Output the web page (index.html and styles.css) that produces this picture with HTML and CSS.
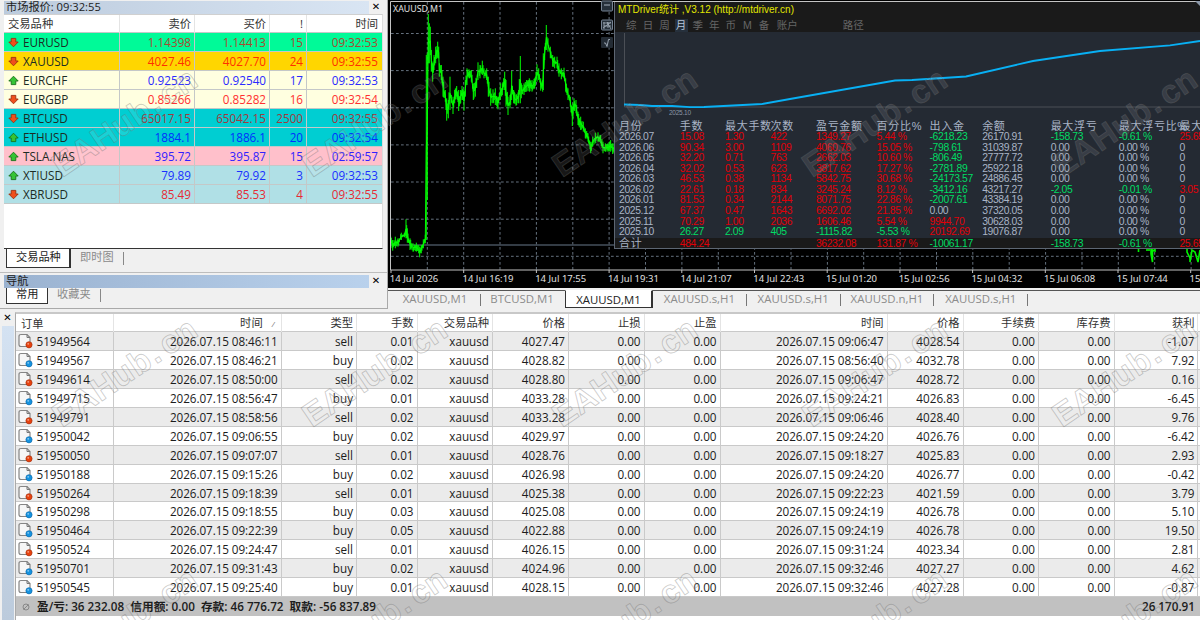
FILE: index.html
```html
<!DOCTYPE html>
<html lang="zh-CN">
<head>
<meta charset="utf-8">
<title>XAUUSD,M1</title>
<link rel="stylesheet" href="styles.css">
</head>
<body>
<div class="app">
  <div class="top">
    <aside class="side">
      <section class="watch">
        <div class="titlebar"><div class="caption">市场报价: 09:32:55</div><span class="close">✕</span></div>
        <div class="quotes" id="quotes">
          <div class="quote head"><span>交易品种</span><span>卖价</span><span>买价</span><span>!</span><span>时间</span></div>
        </div>
        <div class="tabs"><span class="tab on">交易品种</span><span class="tab">即时图</span></div>
      </section>
      <section class="nav">
        <div class="titlebar active"><div class="caption">导航</div><span class="close">✕</span></div>
        <div class="tabs short"><span class="tab on">常用</span><span class="tab">收藏夹</span></div>
      </section>
    </aside>
    <main class="main">
      <div class="chart">
        <svg class="plot" id="plot" width="812" height="288" viewBox="388 0 812 288"></svg>
        <div class="stats">
          <div class="stats-head">
            <svg width="200" height="17"><text x="3" y="11" textLength="176" lengthAdjust="spacingAndGlyphs" class="stats-title">MTDriver统计 ,V3.12 (http://mtdriver.cn)</text></svg>
            <div class="periods"><span>综</span><span>日</span><span>周</span><span class="on">月</span><span>季</span><span>年</span><span>币</span><span>M</span><span>备</span><span class="wide">账户</span><span class="path">路径</span></div>
          </div>
          <svg class="curve" width="585" height="87" viewBox="615 32 585 87">
            <path d="M624.5 33V107H1200" fill="none" stroke="#4b4f56"/>
            <polyline points="624,104.5 640,105 652,106 672,106 690,107.2 704,107 762,104 790,99 895,80.5 912,80 966,76.5 1033,61 1100,51 1170,45.3 1200,41" fill="none" stroke="#08b0f4" stroke-width="1.8"/>
            <text x="669" y="115" textLength="22" class="tiny">2025.10</text>
          </svg>
          <div class="months" id="months"></div>
        </div>
      </div>
      <div class="charttabs"><span>XAUUSD,M1</span><span>BTCUSD,M1</span><span class="on">XAUUSD,M1</span><span>XAUUSD.s,H1</span><span>XAUUSD.s,H1</span><span>XAUUSD.n,H1</span><span>XAUUSD.s,H1</span></div>
    </main>
  </div>
  <div class="terminal">
    <div class="grip"><span class="close">✕</span><div class="gripbar"></div></div>
    <div class="orders" id="orders">
      <div class="order head"><span>订单</span><span class="sorted">时间<i>/</i></span><span>类型</span><span>手数</span><span>交易品种</span><span>价格</span><span>止损</span><span>止盈</span><span>时间</span><span>价格</span><span>手续费</span><span>库存费</span><span>获利</span></div>
    </div>
  </div>
  <svg class="marks" id="marks" width="1200" height="620"></svg>
</div>
<script src="app.js"></script>
</body>
</html>
```
FILE: styles.css
```css
* { box-sizing: border-box; }
body { margin: 0; background: #f0f0f0; font-family: "Open Sans", "Noto Sans CJK SC", sans-serif; font-size: 11.7px; color: #1c1c1c; }
.app { position: relative; width: 1200px; height: 620px; overflow: hidden; display: flex; flex-direction: column; }
.top { display: flex; height: 312px; flex: none; }
.side { width: 388px; flex: none; display: flex; flex-direction: column; border-right: 1px solid #a9a9a9; height: 309px; border-bottom: 1px solid #a9a9a9; }
.watch { padding: 1px 4px 0 4px; height: 273px; border-bottom: 1px solid #bdbdbd; display: flex; flex-direction: column; }
.nav { padding: 2px 4px 0 4px; }
.titlebar { display: flex; height: 13px; width: 379px; line-height: 12px; font-size: 11.2px; }
.caption { width: 365px; padding-left: 2px; background: linear-gradient(90deg, #bccbdd, #d9e5f3); white-space: nowrap; }
.active .caption { background: linear-gradient(90deg, #9ab2d0, #b9d1ec); }
.close { flex: 1; text-align: center; font: bold 10px/12px "DejaVu Sans", sans-serif; color: #000; }
.quotes { background: #fff; width: 379px; height: 235px; border-top: 1px solid #d0d0d0; border-bottom: 1px solid #333; border-right: 1px solid #ddd; }
.quote { display: grid; grid-template-columns: 116px 75px 75px 37px 75px; height: 19px; line-height: 18px; border-bottom: 1px solid #c4c8c8; width: 378px; }
.quote span { border-right: 1px solid #c4c8c8; padding-right: 3px; text-align: right; white-space: nowrap; }
.quote span:first-child { text-align: left; padding-left: 4px; display: flex; align-items: center; }
.quote span:last-child { padding-right: 4px; border-right: 0; }
.quote.head { color: #333; font-size: 11.3px; height: 18px; }
.quote.head span { border-color: #e4e4e4; }
.quote svg { margin-right: 4px; flex: none; }
.tabs { display: flex; width: 379px; height: 19px; padding-left: 2px; }
.tab { padding: 0 9px 0 9px; font-size: 11.2px; line-height: 16px; color: #8a8a8a; white-space: nowrap; }
.tab.on { background: #fff; color: #222; border: 1px solid #333; border-top: 0; border-right-width: 2px; height: 19px; width: 65px; padding-right: 0; }
.tab:not(.on) { border-right: 1px solid #888; height: 13px; margin-top: 3px; line-height: 10px; }
.short { height: 16px; }
.short .tab.on { height: 16px; line-height: 12px; border-right-width: 1px; width: 42px; }
.short .tab:not(.on) { margin-top: 1px; line-height: 9px; }
.main { flex: 1; display: flex; flex-direction: column; }
.chart { position: relative; width: 812px; height: 288px; background: #000; }
.plot { display: block; }
.plot text { font-family: "Noto Sans", sans-serif; font-size: 9.3px; fill: #e0e0e0; }
.stats { position: absolute; left: 226px; top: 2px; width: 586px; height: 247px; overflow: hidden; background: #242a33; border-left: 1px solid #5d6672; border-bottom: 1px solid #5d6672; font-family: "Liberation Sans", "Noto Sans CJK SC", sans-serif; }
.stats-head { height: 30px; background: #1a1a1a; }
.stats-head svg { display: block; }
.stats-title { font-size: 10.3px; fill: #e2e600; }
.periods { display: flex; padding-left: 8px; height: 13px; font-size: 10.5px; line-height: 13px; color: #666; overflow: hidden; }
.periods span { width: 16.6px; text-align: center; flex: none; }
.periods .on { background: #26303c; color: #b9c8dc; width: 13px; margin: 0 1.8px; }
.periods .wide { width: 30px; }
.periods .path { width: 30px; margin-left: 36px; }
.curve { display: block; }
.tiny { font-size: 6.5px; fill: #8b97a5; }
.months { color: #a9b4c6; font-size: 10.4px; letter-spacing: -.4px; }
.month { display: grid; grid-template-columns: 60.8px 45.2px 45.6px 45.4px 60.6px 53px 52.6px 68.5px 68.2px 60.6px 60px; padding-left: 4px; height: 10.57px; line-height: 10px; white-space: nowrap; }
.month.head { height: 13px; line-height: 14px; font-size: 11px; letter-spacing: .7px; }
.month.total { background: #1a1a1a; height: 11px; line-height: 12px; }
.month.total span:first-child { font-size: 11px; line-height: 11px; letter-spacing: .7px; }
.r { color: #e00008; }
.g { color: #00dc64; }
.charttabs { display: flex; align-items: flex-start; height: 24px; border-top: 1px solid #555; margin-top: 2px; padding-left: 2px; }
.charttabs span { height: 12px; line-height: 10px; margin-top: 3px; border-right: 1px solid #777; color: #8c8c8c; text-align: center; white-space: nowrap; font-size: 11.4px; width: 93.8px; flex: none; }
.charttabs span:first-child { width: 91px; }
.charttabs span:nth-child(2) { width: 84px; border: 0; padding-right: 2px; }
.charttabs .on { width: 88px; height: 18px; line-height: 15px; margin-top: -1px; background: #fff; color: #222; border: 1px solid #333; border-top-color: #fff; border-right-width: 2px; padding-top: 1px; }
.terminal { display: flex; flex: 1; }
.grip { width: 15px; flex: none; padding: 0 0 0 2px; display: flex; flex-direction: column; }
.grip .close { height: 14px; flex: none; width: 11px; }
.gripbar { flex: 1; width: 12px; background: linear-gradient(#d4e2f2, #bccbdc); }
.orders { width: 1185px; flex: none; background: #fff; border-left: 1px solid #aaa; border-top: 2px solid #c8c8c8; }
.order { display: grid; grid-template-columns: 98px 167.5px 75.5px 60.5px 75.5px 76px 75.5px 76px 167px 76px 75.5px 75.5px 83px; height: 18.94px; line-height: 18px; border-bottom: 1px solid #c9c9c9; }
.order:nth-child(even) { background: #ebebeb; }
.order span { border-right: 1px solid #cacaca; padding-right: 3px; text-align: right; white-space: nowrap; }
.order span:first-child { text-align: left; padding-left: 2px; display: flex; align-items: center; }
.order span:last-child { padding-right: 2px; }
.order span:nth-child(2):not(.sorted), .order:not(.head) span:nth-child(9) { letter-spacing: -.07px; }
.order svg { margin-right: 3.5px; flex: none; }
.order.head { font-size: 11.3px; color: #333; height: 18px; }
.order.head span { border-color: #e4e4e4; }
.order.head span:first-child { padding-left: 5px; }
.order .sorted { padding-right: 6px; }
.sorted i { font-size: 8px; margin-left: 9px; color: #777; }
.summary { background: #c1c1c1; height: 19px; line-height: 19px; display: flex; font-weight: 600; padding: 0 5px 0 6px; white-space: pre; font-size: 11.7px; align-items: center; }
.summary .total { margin-left: auto; }
.summary svg { margin-right: 7px; }
.marks { position: absolute; left: 0; top: 0; pointer-events: none; }
.marks text { font-family: "Liberation Sans", sans-serif; font-size: 33px; font-weight: bold; fill: rgba(255,255,255,.1); stroke: rgba(110,110,110,.36); stroke-width: .9; stroke-linejoin: round; }
```
FILE: app.js
```javascript
const $ = id => document.getElementById(id);

// Market watch
const quotes = [
  ['EURUSD', '1.14398', '1.14413', '15', '09:32:53', 0, '#00fa98', '#a84a30'],
  ['XAUUSD', '4027.46', '4027.70', '24', '09:32:55', 0, '#ffd600', '#ff3000'],
  ['EURCHF', '0.92523', '0.92540', '17', '09:32:53', 1, '#ffffe0', '#2a2aff'],
  ['EURGBP', '0.85266', '0.85282', '16', '09:32:54', 0, '#ffffe0', '#ff3030'],
  ['BTCUSD', '65017.15', '65042.15', '2500', '09:32:55', 0, '#00ced2', '#a03a40'],
  ['ETHUSD', '1884.1', '1886.1', '20', '09:32:54', 1, '#00ced2', '#0030ff'],
  ['TSLA.NAS', '395.72', '395.87', '15', '02:59:57', 1, '#ffc0cb', '#3020ff'],
  ['XTIUSD', '79.89', '79.92', '3', '09:32:53', 1, '#b0e0e6', '#1a30ff'],
  ['XBRUSD', '85.49', '85.53', '4', '09:32:55', 0, '#b0e0e6', '#e62a34']
];
const arrow = up => `<svg width="11" height="11" viewBox="0 0 11 11"><path d="M5.5 1.2 10.2 6H7.8V9.6H3.2V6H.8Z" fill="${up ? '#35c435' : '#f0501c'}" stroke="${up ? '#1a701a' : '#9c3010'}" stroke-width=".9" stroke-linejoin="round" ${up ? '' : 'transform="rotate(180 5.5 5.5)"'}/></svg>`;
$('quotes').insertAdjacentHTML('beforeend', quotes.map(q =>
  `<div class="quote" style="background:${q[6]};color:${q[7]}"><span style="color:#1c2c24">${arrow(q[5])}${q[0]}</span>${q.slice(1, 5).map(v => `<span>${v}</span>`).join('')}</div>`).join(''));

// Orders
const orders = `51949564|08:46:11|sell|0.01|4027.47|09:06:47|4028.54|-1.07
51949567|08:46:21|buy|0.02|4028.82|08:56:40|4032.78|7.92
51949614|08:50:00|sell|0.02|4028.80|09:06:47|4028.72|0.16
51949715|08:56:47|buy|0.01|4033.28|09:24:21|4026.83|-6.45
51949791|08:58:56|sell|0.02|4033.28|09:06:46|4028.40|9.76
51950042|09:06:55|buy|0.02|4029.97|09:24:20|4026.76|-6.42
51950050|09:07:07|sell|0.01|4028.76|09:18:27|4025.83|2.93
51950188|09:15:26|buy|0.02|4026.98|09:24:20|4026.77|-0.42
51950264|09:18:39|sell|0.01|4025.38|09:22:23|4021.59|3.79
51950298|09:18:55|buy|0.03|4025.08|09:24:19|4026.78|5.10
51950464|09:22:39|buy|0.05|4022.88|09:24:19|4026.78|19.50
51950524|09:24:47|sell|0.01|4026.15|09:31:24|4023.34|2.81
51950701|09:31:43|buy|0.02|4024.96|09:32:46|4027.27|4.62
51950545|09:25:40|buy|0.01|4028.15|09:32:46|4027.28|-0.87`.split('\n').map(l => l.split('|'));
const doc = sell => `<svg width="15" height="16" viewBox="0 0 15 16"><path d="M3 1.5H9L12 4.5V13.5H3Q1 13.5 1 11.5V3.5Q1 1.5 3 1.5Z" fill="#f6f6f6" stroke="#858585" stroke-width="1.2"/><path d="M9 1.5V4.5H12" fill="none" stroke="#777"/><circle cx="11" cy="11.8" r="3.1" fill="${sell ? '#e8420e' : '#1593e0'}" stroke="${sell ? '#a83210' : '#0e6cae'}" stroke-width=".7"/><circle cx="10.2" cy="10.8" r=".9" fill="#fff" opacity=".5"/></svg>`;
$('orders').insertAdjacentHTML('beforeend', orders.map(o => {
  const cells = ['2026.07.15 ' + o[1], o[2], o[3], 'xauusd', o[4], '0.00', '0.00', '2026.07.15 ' + o[5], o[6], '0.00', '0.00', o[7]];
  return `<div class="order"><span>${doc(o[2] === 'sell')}${o[0]}</span>${cells.map(c => `<span>${c}</span>`).join('')}</div>`;
}).join('') + `<div class="summary"><svg width="8" height="8"><circle cx="4" cy="4" r="3" fill="none" stroke="#888"/><path d="M1.5 6.5 6.5 1.5" stroke="#888"/></svg><span>盈/亏: 36 232.08  信用额: 0.00  存款: 46 776.72  取款: -56 837.89</span><span class="total">26 170.91</span></div>`);

// Monthly statistics; r and g prefixes select the cell colour
const months = `2026.07|r15.08|r1.30|r422|r1349.27|r5.44 %|g-6218.23|26170.91|g-158.73|g-0.61 %|r25.65
2026.06|r90.34|r3.00|r1109|r4060.76|r15.05 %|g-798.61|31039.87|0.00|0.00 %|0
2026.05|r32.20|r0.71|r763|r2662.03|r10.60 %|g-806.49|27777.72|0.00|0.00 %|0
2026.04|r32.02|r0.53|r623|r3817.62|r17.27 %|g-2781.89|25922.18|0.00|0.00 %|0
2026.03|r46.53|r0.38|r1134|r5842.75|r30.68 %|g-24173.57|24886.45|0.00|0.00 %|0
2026.02|r22.61|r0.18|r834|r3245.24|r8.12 %|g-3412.16|43217.27|g-2.05|g-0.01 %|r3.05
2026.01|r81.53|r0.34|r2144|r8071.75|r22.86 %|g-2007.61|43384.19|0.00|0.00 %|0
2025.12|r67.37|r0.47|r1643|r6692.02|r21.85 %|0.00|37320.05|0.00|0.00 %|0
2025.11|r70.29|r1.00|r2036|r1606.46|r5.54 %|r9944.70|30628.03|0.00|0.00 %|0
2025.10|g26.27|g2.09|g405|g-1115.82|g-5.53 %|r20192.69|19076.87|0.00|0.00 %|0
合计|r484.24|||r36232.08|r131.87 %|g-10061.17||g-158.73|g-0.61 %|r25.65`.split('\n');
const cell = c => /^[rg]/.test(c) ? `<span class="${c[0]}">${c.slice(1)}</span>` : `<span>${c}</span>`;
const heads = ['月份', '手数', '最大手数', '次数', '盈亏金额', '百分比%', '出入金', '余额', '最大浮亏', '最大浮亏比%', '最大'];
$('months').innerHTML = `<div class="month head">${heads.map(cell).join('')}</div>` +
  months.map((m, i) => `<div class="month${i === 10 ? ' total' : ''}">${m.split('|').map(cell).join('')}</div>`).join('');

// Price chart: [x, high, low] in thirds of a pixel from the left of the plot
const env = [8,710,735,14,720,752,22,710,745,30,715,740,40,698,720,50,698,712,54,658,715,58,685,728,66,715,750,75,730,755,85,728,755,92,735,760,95,740,772,100,735,760,106,718,745,112,704,730,115,165,720,118,160,600,121,42,190,124,70,190,127,80,165,130,150,215,134,190,245,138,165,210,143,140,190,149,125,175,152,140,175,154,190,230,160,195,240,165,230,290,172,270,305,176,295,362,181,300,355,186,230,330,190,285,310,195,290,342,200,270,310,206,258,290,212,270,333,218,270,310,222,258,300,228,275,332,232,240,290,237,205,255,243,208,235,250,210,245,256,250,300,262,245,290,270,187,240,276,195,235,283,182,225,288,205,235,296,205,240,301,230,290,308,265,317,315,268,310,322,265,315,330,290,328,337,250,300,343,250,285,350,215,270,354,240,320,360,290,345,366,285,325,371,213,300,377,270,310,384,285,317,392,270,310,397,168,310,400,250,295,408,250,285,416,240,275,424,235,275,432,240,275,440,235,265,447,193,245,452,205,240,458,235,272,464,240,275,466,160,270,470,140,180,475,75,150,480,115,155,487,140,175,494,165,200,500,170,205,507,170,205,513,190,230,520,205,238,528,203,235,533,235,275,540,265,300,547,290,320,553,320,378,558,295,330,564,300,340,570,335,375,578,350,390,586,365,395,592,385,415,600,400,425,608,425,460,614,410,440,622,398,430,630,397,425,638,405,430,645,425,460,652,430,455,660,430,455,668,420,455,674,430,462,678,430,460];
let seed = 7;
const rnd = () => (seed = (seed * 16807) % 2147483647) / 2147483647;
const X = v => (v / 3 + 388).toFixed(1), Y = v => (v / 3).toFixed(1);
let bars = '', mid = '';
for (let i = 0; i < env.length; i += 3) {
  const [x, a, b, x2, a2, b2] = env.slice(i, i + 6);
  bars += `M${X(x)} ${Y(a)}V${Y(b)}`;
  mid += `${mid ? 'L' : 'M'}${X(x)} ${Y((a + b) / 2)}`;
  if (x2 === undefined || x2 - x < 4) continue;
  for (let t = x + 2; t < x2 - 1; t += 2) {
    const k = (t - x) / (x2 - x), hi = a + (a2 - a) * k, lo = b + (b2 - b) * k, h = lo - hi;
    bars += `M${X(t)} ${Y(hi + h * rnd() * .48)}V${Y(lo - h * rnd() * .48)}`;
  }
}
let grid = '', ticks = '';
for (let i = 0; i < 22; i++) grid += `M${(427.3 + i * 36.37).toFixed(1)} 2V270`;
for (let i = 0; i < 7; i++) grid += `M391 ${(33.5 + i * 37.13).toFixed(1)}H1200`;
const times = ['14 Jul 2026', '14 Jul 16:19', '14 Jul 17:55', '14 Jul 19:31', '14 Jul 21:07', '14 Jul 22:43', '15 Jul 01:20', '15 Jul 02:56', '15 Jul 04:32', '15 Jul 06:08', '15 Jul 07:44', '15 Jul 09:20'];
const labels = times.map((t, i) => {
  ticks += `M${(391 + i * 72.7).toFixed(1)} 270V273`;
  return `<text x="${(389.8 + i * 72.7).toFixed(1)}" y="282.3" textLength="${i ? 51 : 48.5}" lengthAdjust="spacingAndGlyphs">${t}</text>`;
}).join('');
const button = (y, inner) => `<rect x="601.5" y="${y}" width="11" height="10" rx="1" fill="#26303a" stroke="#778494"/>${inner}`;
$('plot').innerHTML = `<path d="${grid}" stroke="#65717e" stroke-dasharray="2.7 2.3" fill="none"/>
<path d="M391 245H1200" stroke="#46505c" stroke-width="1.4"/>
<path d="${bars}" stroke="#00ff00" fill="none"/><path d="${mid}" stroke="#00ff00" fill="none"/>
<path d="M1138.5 248V252M1147 248V251M1149 248V251M1151 248V254L1152.5 262V250L1155 251V248M1187 248V252L1190 258V262L1192 250L1195 252L1198 262L1200 250" stroke="#00f400" stroke-width="1.6" fill="none"/>
<path d="M1200 1.5H390.5V270H1200M${ticks.slice(1)}" stroke="#c4c4c4" fill="none"/>
${button(1, '<path d="M604 5H610" stroke="#a5b0bd"/>')}${button(20, '<path d="M603 23H611M604 22V29M603 28 611 22M607 22 611 29M604 26H611M608 22V28" stroke="#a5b0bd" stroke-width=".8"/>')}
<rect x="601" y="37" width="12" height="11" rx="1" fill="#232b34"/><path d="M604 43 605.5 43 607 46.5 608.5 39.5H610" stroke="#a5b0bd" fill="none" stroke-width=".9"/>
<text x="393" y="12" textLength="50" lengthAdjust="spacingAndGlyphs">XAUUSD,M1</text>${labels}`;

// Tiled watermark
let marks = '<path d="M1195 1H1200V6Z" fill="#8b97a8"/>';
for (let r = 0; r < 3; r++) for (let c = -1; c < 5; c++)
  marks += `<text transform="translate(${62 + c * 250} ${178 + r * 250}) rotate(-34)" x="0 22 46 70 91 113.5 128 146">EAHub.cn</text>`;
$('marks').innerHTML = marks;
```
